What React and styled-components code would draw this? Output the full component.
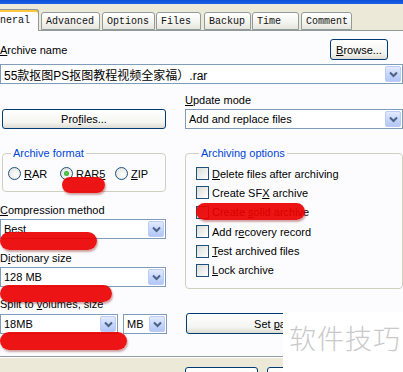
import React from "react";
import styled, { createGlobalStyle } from "styled-components";

const GlobalStyle = createGlobalStyle`
  html, body { margin: 0; padding: 0; background: #ece9d8; }
  body { font-family: "Liberation Sans", Tahoma, "Noto Sans CJK SC", sans-serif; font-size: 11px; color: #000; }
`;

const Page = styled.div`
  position: relative;
  width: 403px;
  height: 372px;
  overflow: hidden;
  background: #ece9d8;
  display: flex;
  flex-direction: column;
`;

const TitleStrip = styled.div`
  height: 4px;
  background: linear-gradient(#0a4fd6, #1e62e8);
  flex-shrink: 0;
`;

const TabRow = styled.div`
  height: 26px;
  display: flex;
  align-items: flex-end;
  gap: 1px;
  margin-left: -17px;
  flex-shrink: 0;
  position: relative;
  z-index: 1;
`;

const Tab = styled.div`
  font-family: "Liberation Mono", "DejaVu Sans Mono", monospace;
  font-size: 10px;
  color: #111;
  height: ${(p) => (p.$active ? "22px" : "18px")};
  margin-bottom: ${(p) => (p.$active ? "-1px" : "0")};
  padding: 0 ${(p) => p.$pad || 5}px 0 4px;
  display: flex;
  align-items: center;
  box-sizing: border-box;
  border: 1px solid #919b9c;
  border-bottom: ${(p) => (p.$active ? "none" : "1px solid #919b9c")};
  border-radius: 3px 3px 0 0;
  background: ${(p) =>
    p.$active ? "#fcfcfe" : "linear-gradient(#ffffff, #f3f3ef 60%, #e6e5dd)"};
  box-shadow: ${(p) => (p.$active ? "inset 0 2px 0 #ffc83c, inset 0 1px 0 #e68b2c" : "none")};
  margin-right: ${(p) => p.$gap || 0}px;
`;

const Panel = styled.div`
  background: #fcfcfe;
  border-top: 1px solid #919b9c;
  border-bottom: 1px solid #919b9c;
  height: 327px;
  box-sizing: border-box;
  padding-top: 8px;
  flex-shrink: 0;
`;

const NameRow = styled.div`
  display: flex;
  justify-content: space-between;
  align-items: flex-end;
  padding-right: 15px;
`;

const Label = styled.div`
  height: 13px;
  line-height: 13px;
  white-space: nowrap;
  margin-top: ${(p) => p.$top || 0}px;
  padding-bottom: ${(p) => p.$bottom || 0}px;
`;

const Button = styled.div`
  box-sizing: border-box;
  width: ${(p) => p.$w}px;
  height: ${(p) => p.$h || 21}px;
  margin-top: ${(p) => p.$top || 0}px;
  margin-left: ${(p) => p.$left || 0}px;
  border: 1px solid #003c74;
  border-radius: 3px;
  background: linear-gradient(#ffffff, #f4f4f0 70%, #dcdcd2);
  display: flex;
  align-items: center;
  justify-content: center;
  white-space: pre;
  flex-shrink: 0;
`;

const Combo = styled.div`
  box-sizing: border-box;
  width: ${(p) => (p.$w ? `${p.$w}px` : "100%")};
  height: ${(p) => p.$h || 20}px;
  margin-top: ${(p) => p.$top || 0}px;
  border: 1px solid #7f9db9;
  background: #fff;
  display: flex;
  align-items: center;
  padding: 1px;
  flex-shrink: 0;
`;

const ComboText = styled.div`
  flex: 1;
  padding-left: 2px;
  white-space: nowrap;
  overflow: hidden;
  font-size: ${(p) => p.$size || 11}px;
`;

const DropBtn = styled.div`
  width: 16px;
  align-self: stretch;
  box-sizing: border-box;
  border: 1px solid #bccbf6;
  border-radius: 2px;
  background: linear-gradient(#e2eafd, #c5d5fb 55%, #b3c7f5);
  display: flex;
  align-items: center;
  justify-content: center;
`;

const Columns = styled.div`
  display: flex;
  gap: 19px;
  margin-top: ${(p) => p.$top || 0}px;
`;

const Column = styled.div`
  width: ${(p) => p.$w}px;
  display: flex;
  flex-direction: column;
  padding-left: ${(p) => p.$pl || 0}px;
  box-sizing: border-box;
  flex-shrink: 0;
`;

const Group = styled.fieldset`
  margin: ${(p) => p.$top || 0}px 0 0 0;
  padding: 6px ${(p) => p.$px || 6}px 0;
  border: 1px solid #d0d0bf;
  border-radius: 4px;
  height: ${(p) => p.$h}px;
  box-sizing: border-box;
  min-width: 0;
  legend {
    color: #0046d5;
    padding: 0 2px;
    margin-left: 3px;
    line-height: 13px;
  }
`;

const RadioRow = styled.div`
  display: flex;
  margin-top: 1px;
`;

const RadioItem = styled.div`
  display: flex;
  align-items: center;
  gap: 3px;
  width: ${(p) => p.$w}px;
`;

const RadioDot = styled.span`
  width: 13px;
  height: 13px;
  box-sizing: border-box;
  border-radius: 50%;
  border: 1px solid #1c5180;
  background: radial-gradient(circle at 60% 60%, #ffffff, #dcdcd5);
  display: flex;
  align-items: center;
  justify-content: center;
  &::after {
    content: "";
    width: 5px;
    height: 5px;
    border-radius: 50%;
    background: ${(p) => (p.$on ? "radial-gradient(#5fd35f, #21a121)" : "transparent")};
  }
`;

const CheckList = styled.div`
  display: flex;
  flex-direction: column;
  gap: 6.4px;
  padding-top: 1px;
`;

const CheckItem = styled.div`
  display: flex;
  align-items: center;
  gap: 3px;
  white-space: nowrap;
  height: 13px;
`;

const Box = styled.span`
  width: 13px;
  height: 13px;
  box-sizing: border-box;
  border: 1px solid #1c5180;
  background: linear-gradient(135deg, #dcdcd5, #ffffff);
  flex-shrink: 0;
`;

const SplitRow = styled.div`
  display: flex;
  gap: 5px;
  margin-top: 3px;
`;

const Footer = styled.div`
  flex: 1;
  border-top: 1px solid #ffffff;
  display: flex;
  padding: 9px 0 0 185px;
  gap: 9px;
`;

const Marker = styled.div`
  position: absolute;
  background: rgba(234, 0, 0, 0.92);
  border-radius: 10px;
  box-shadow: 1px 2px 2px rgba(120, 0, 0, 0.35);
`;

const Watermark = styled.div`
  position: absolute;
  left: 283px;
  top: 312px;
  width: 120px;
  height: 60px;
  background: #ffffff;
  color: #c9c9c9;
  font-family: "Noto Sans CJK SC", sans-serif;
  font-weight: 300;
  font-size: 27px;
  display: flex;
  padding: 6px 0 0 6px;
  box-sizing: border-box;
  letter-spacing: 1px;
  white-space: nowrap;
`;

const Chevron = () => (
  <svg width="9" height="7" viewBox="0 0 9 7">
    <path d="M1 1.5 L4.5 5 L8 1.5" fill="none" stroke="#4d6185" strokeWidth="2" />
  </svg>
);

const Select = ({ children, w, top, size }) => (
  <Combo $w={w} $top={top}>
    <ComboText $size={size}>{children}</ComboText>
    <DropBtn>
      <Chevron />
    </DropBtn>
  </Combo>
);

const tabs = [
  { name: "Advanced", gap: 1 },
  { name: "Options", gap: 0 },
  { name: "Files", pad: 9, gap: 2 },
  { name: "Backup", gap: 0 },
  { name: "Time", pad: 17, gap: 1 },
  { name: "Comment", pad: 3 },
];

const options = [
  <><u>D</u>elete files after archiving</>,
  <>Create SF<u>X</u> archive</>,
  <>Create <u>s</u>olid archive</>,
  <>Add r<u>e</u>covery record</>,
  <><u>T</u>est archived files</>,
  <><u>L</u>ock archive</>,
];

const markers = [
  { left: 62, top: 177, width: 43, height: 16 },
  { left: 196, top: 203, width: 109, height: 17 },
  { left: 0, top: 232, width: 97, height: 18 },
  { left: 0, top: 285, width: 112, height: 17 },
  { left: 0, top: 332, width: 127, height: 18 },
];

export default function App() {
  return (
    <Page>
      <GlobalStyle />
      <TitleStrip />
      <TabRow>
        <Tab $active $pad={8} $gap={1}>General</Tab>
        {tabs.map((t) => (
          <Tab key={t.name} $pad={t.pad} $gap={t.gap}>
            {t.name}
          </Tab>
        ))}
      </TabRow>
      <Panel>
        <NameRow>
          <Label $bottom={3}>
            <u>A</u>rchive name
          </Label>
          <Button $w={58}>
            <span><u>B</u>rowse...</span>
          </Button>
        </NameRow>
        <Select top={4} size={12}>55款抠图PS抠图教程视频全家福）.rar</Select>
        <Columns $top={8}>
          <Column $w={166} $pl={2}>
            <Button $w={164} $h={20} $top={17}>
              <span>Pro<u>f</u>iles...</span>
            </Button>
            <Group $top={18} $h={45} $px={5}>
              <legend>Archive format</legend>
              <RadioRow>
                <RadioItem $w={52}>
                  <RadioDot />
                  <span><u>R</u>AR</span>
                </RadioItem>
                <RadioItem $w={55}>
                  <RadioDot $on />
                  <span>RAR<u>5</u></span>
                </RadioItem>
                <RadioItem $w={40}>
                  <RadioDot />
                  <span><u>Z</u>IP</span>
                </RadioItem>
              </RadioRow>
            </Group>
          </Column>
          <Column $w={218}>
            <Label $top={2}>
              <u>U</u>pdate mode
            </Label>
            <Select top={2}>Add and replace files</Select>
          </Column>
        </Columns>
        <Columns>
          <Column $w={166}>
            <Label $top={12}>
              <u>C</u>ompression method
            </Label>
            <Select top={2}>Best</Select>
            <Label $top={13}>
              D<u>i</u>ctionary size
            </Label>
            <Select top={2}>128 MB</Select>
            <Label $top={11}>
              Split to <u>v</u>olumes, size
            </Label>
            <SplitRow>
              <Select w={118}>18MB</Select>
              <Select w={44}>MB</Select>
            </SplitRow>
          </Column>
          <Column $w={218}>
            <Group $top={-45} $h={142} $px={10}>
              <legend>Archiving options</legend>
              <CheckList>
                {options.map((o, i) => (
                  <CheckItem key={i}>
                    <Box />
                    <span>{o}</span>
                  </CheckItem>
                ))}
              </CheckList>
            </Group>
            <Button $w={212} $h={21} $top={24} $left={1}>
              <span>Set <u>p</u>assword...</span>
            </Button>
          </Column>
        </Columns>
      </Panel>
      <Footer>
        <Button $w={73} $h={23}>确定</Button>
        <Button $w={73} $h={23}>取消</Button>
      </Footer>
      {markers.map((m, i) => (
        <Marker key={i} style={m} />
      ))}
      <Watermark>软件技巧</Watermark>
    </Page>
  );
}
